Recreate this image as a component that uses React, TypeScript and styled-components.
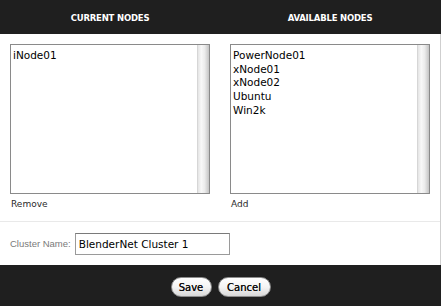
import styled, { createGlobalStyle } from 'styled-components';

const GlobalStyle = createGlobalStyle`
  html, body {
    margin: 0;
    padding: 0;
    background: #ffffff;
  }
  body {
    font-family: "DejaVu Sans", "Liberation Sans", sans-serif;
  }
`;

const Dialog = styled.div`
  width: 441px;
  height: 306px;
  display: flex;
  flex-direction: column;
`;

const Header = styled.div`
  height: 34px;
  background: #1f1f1f;
  display: grid;
  grid-template-columns: 220px 220px;
  align-items: center;
  padding-right: 1px;
`;

const HeaderTitle = styled.div`
  text-align: center;
  color: #ffffff;
  font-size: 8.5px;
  font-weight: bold;
  letter-spacing: -0.2px;
  padding-top: 1px;
`;

const Body = styled.div`
  flex: 1;
  background: #ffffff;
  border-right: 1px solid #cfcfcf;
  display: flex;
  flex-direction: column;
`;

const Columns = styled.div`
  display: grid;
  grid-template-columns: 220px 220px;
  padding-top: 10px;
  height: 177px;
  border-bottom: 1px solid #e9e9e9;
`;

const Column = styled.div`
  padding-left: 10px;
  display: flex;
  flex-direction: column;
`;

const ListBox = styled.div`
  width: 200px;
  height: 150px;
  box-sizing: border-box;
  border: 1px solid #8a8a8a;
  display: flex;
  background: #ffffff;
`;

const Items = styled.ul`
  flex: 1;
  margin: 0;
  padding: 4px 0 0 2px;
  list-style: none;
`;

const Item = styled.li`
  font-size: 10.5px;
  line-height: 13.7px;
  color: #000000;
`;

const ScrollTrack = styled.div`
  width: 11px;
  border-left: 1px solid #d6d6d6;
  background: linear-gradient(
    to right,
    #e4e4e4 0%,
    #f8f8f8 30%,
    #ececec 60%,
    #c4c4c4 100%
  );
`;

const Caption = styled.div`
  margin-top: 5px;
  padding-left: 1px;
  font-size: 9px;
  color: #2a2a2a;
`;

const NameRow = styled.div`
  height: 43px;
  display: flex;
  align-items: center;
  padding-left: 10px;
  gap: 4px;
`;

const NameLabel = styled.label`
  font-family: "Liberation Sans", "DejaVu Sans", sans-serif;
  font-size: 9.5px;
  color: #7a7a7a;
`;

const NameInput = styled.input`
  width: 155px;
  height: 22px;
  box-sizing: border-box;
  border: 1px solid #9a9a9a;
  border-top-color: #7a7a7a;
  padding: 0 3px;
  margin: 0;
  font-family: "DejaVu Sans", "Liberation Sans", sans-serif;
  font-size: 10.5px;
  color: #000000;
  outline: none;
`;

const Footer = styled.div`
  height: 41px;
  background: #1f1f1f;
  display: flex;
  justify-content: center;
  align-items: center;
  gap: 6px;
  padding-top: 3px;
  box-sizing: border-box;
`;

const PillButton = styled.button<{ $w: number }>`
  width: ${(p) => p.$w}px;
  height: 20px;
  border-radius: 10px;
  border: 1px solid #8c8c8c;
  background: linear-gradient(to bottom, #ffffff 0%, #f4f4f4 50%, #d8d8d8 100%);
  font-family: "DejaVu Sans", "Liberation Sans", sans-serif;
  font-size: 10px;
  color: #111111;
  text-shadow: 0 0 0.4px #111111;
  padding: 0;
  cursor: pointer;
`;

const currentNodes = ['iNode01'];
const availableNodes = ['PowerNode01', 'xNode01', 'xNode02', 'Ubuntu', 'Win2k'];

const NodeList = ({ nodes }: { nodes: string[] }) => (
  <ListBox>
    <Items>
      {nodes.map((n) => (
        <Item key={n}>{n}</Item>
      ))}
    </Items>
    <ScrollTrack />
  </ListBox>
);

export default function App() {
  return (
    <>
      <GlobalStyle />
      <Dialog>
        <Header>
          <HeaderTitle>CURRENT NODES</HeaderTitle>
          <HeaderTitle>AVAILABLE NODES</HeaderTitle>
        </Header>
        <Body>
          <Columns>
            <Column>
              <NodeList nodes={currentNodes} />
              <Caption>Remove</Caption>
            </Column>
            <Column>
              <NodeList nodes={availableNodes} />
              <Caption>Add</Caption>
            </Column>
          </Columns>
          <NameRow>
            <NameLabel htmlFor="cluster-name">Cluster Name:</NameLabel>
            <NameInput id="cluster-name" defaultValue="BlenderNet Cluster 1" />
          </NameRow>
        </Body>
        <Footer>
          <PillButton $w={41}>Save</PillButton>
          <PillButton $w={53}>Cancel</PillButton>
        </Footer>
      </Dialog>
    </>
  );
}
